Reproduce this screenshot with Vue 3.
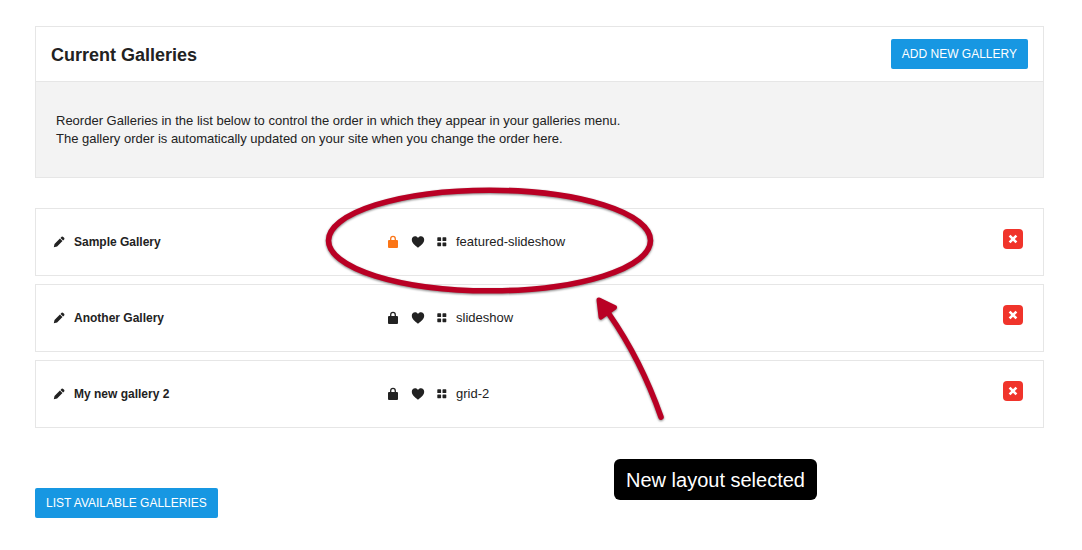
<script setup>
import { ref } from 'vue'

const galleries = ref([
  { name: 'Sample Gallery', layout: 'featured-slideshow', locked: true },
  { name: 'Another Gallery', layout: 'slideshow', locked: false },
  { name: 'My new gallery 2', layout: 'grid-2', locked: false },
])
</script>

<template>
  <main class="page">
    <section class="panel">
      <header class="panel-head">
        <h1>Current Galleries</h1>
        <button type="button" class="btn">ADD NEW GALLERY</button>
      </header>
      <p class="help">
        Reorder Galleries in the list below to control the order in which they appear in your galleries menu.<br>
        The gallery order is automatically updated on your site when you change the order here.
      </p>
    </section>

    <ul class="list">
      <li v-for="g in galleries" :key="g.name" class="row">
        <div class="name">
          <button type="button" class="icon" :aria-label="'Edit ' + g.name">
            <svg width="12" height="12" viewBox="0 0 12 12">
              <path d="M.8 11.2 L1.5 8 L6.9 2.5 L9.5 5.1 L4.1 10.5 Z M7.5 1.9 L8.6.8 Q9.4.2 10.2.9 L11.1 1.8 Q11.8 2.6 11.2 3.4 L10.1 4.5 Z" />
            </svg>
          </button>
          <strong>{{ g.name }}</strong>
        </div>
        <div class="tools">
          <button type="button" class="icon" :class="{ locked: g.locked }" :aria-label="'Lock ' + g.name">
            <svg width="12" height="14" viewBox="0 0 12 14">
              <path d="M3.7 6 V3.9 Q3.7 1.3 6 1.3 Q8.3 1.3 8.3 3.9 V6" fill="none" stroke="currentColor" stroke-width="1.3" />
              <rect x="1" y="5" width="10" height="8" rx="1" />
            </svg>
          </button>
          <button type="button" class="icon" :aria-label="'Favourite ' + g.name">
            <svg width="14" height="14" viewBox="0 0 14 14">
              <path d="M7 12.8 C5.8 11.4 .8 8.6 .8 4.7 C.8 2.5 2.2 1.2 4 1.2 C5.4 1.2 6.4 1.9 7 2.9 C7.6 1.9 8.6 1.2 10 1.2 C11.8 1.2 13.2 2.5 13.2 4.7 C13.2 8.6 8.2 11.4 7 12.8 Z" />
            </svg>
          </button>
          <button type="button" class="icon" :aria-label="'Layout of ' + g.name">
            <svg width="10" height="14" viewBox="0 0 10 14">
              <rect x="0.3" y="2.3" width="3.8" height="3.8" rx="0.6" />
              <rect x="5.5" y="2.3" width="3.8" height="3.8" rx="0.6" />
              <rect x="0.3" y="7.4" width="3.8" height="3.8" rx="0.6" />
              <rect x="5.5" y="7.4" width="3.8" height="3.8" rx="0.6" />
            </svg>
          </button>
          <span class="layout">{{ g.layout }}</span>
        </div>
        <button type="button" class="delete" :aria-label="'Delete ' + g.name">
          <svg width="10" height="10" viewBox="0 0 10 10">
            <path d="M1.6 1.6 L8.4 8.4 M8.4 1.6 L1.6 8.4" stroke="currentColor" stroke-width="2.6" />
          </svg>
        </button>
      </li>
    </ul>

    <button type="button" class="btn">LIST AVAILABLE GALLERIES</button>

    <svg class="marks" width="400" height="260" viewBox="300 170 400 260" aria-hidden="true">
      <ellipse cx="489.5" cy="240.5" rx="161" ry="50.3" fill="none" stroke="#b90024" stroke-width="5.6" />
      <path d="M609 314 Q641 360 661 417" fill="none" stroke="#b90024" stroke-width="5.6" stroke-linecap="round" />
      <path d="M599 300 L614.5 307.5 L601 317 Z" fill="#b90024" stroke="#b90024" stroke-width="5" stroke-linejoin="round" />
    </svg>
    <div class="callout">New layout selected</div>
  </main>
</template>

<style>
body {
  margin: 0;
  background: #fff;
}
</style>

<style scoped>
.page {
  position: relative;
  padding: 26px 38px 32px 35px;
  font: 13px/18px "Liberation Sans", Arial, sans-serif;
  color: #222;
}
.panel {
  border: 1px solid #e6e6e6;
}
.panel-head {
  display: flex;
  align-items: center;
  justify-content: space-between;
  padding: 12px 15px;
  border-bottom: 1px solid #e6e6e6;
}
h1 {
  margin: 0;
  padding-top: 2px;
  font-size: 18px;
  line-height: 24px;
}
.btn {
  height: 30px;
  padding: 0 11px;
  border: 0;
  border-radius: 2px;
  background: #1797e2;
  color: #fff;
  font: 12px/30px "Liberation Sans", Arial, sans-serif;
}
.help {
  margin: 0;
  padding: 30px 20px 29px;
  background: #f3f3f3;
}
.list {
  display: grid;
  gap: 8px;
  margin: 30px 0 60px;
  padding: 0;
  list-style: none;
}
.row {
  display: grid;
  grid-template-columns: 334px 1fr auto;
  align-items: center;
  padding: 20px 20px 24px 17px;
  border: 1px solid #e6e6e6;
  background: #fff;
}
.name,
.tools {
  display: flex;
  align-items: center;
  padding-top: 4px;
}
.name {
  gap: 9px;
  font-size: 12px;
}
.icon {
  display: flex;
  padding: 0;
  border: 0;
  background: none;
  color: #222;
}
.icon svg {
  fill: currentColor;
}
.tools {
  gap: 12px;
}
.layout {
  margin-left: -3px;
}
.locked {
  color: #fb7516;
}
.delete {
  display: flex;
  align-items: center;
  justify-content: center;
  align-self: start;
  width: 20px;
  height: 20px;
  padding: 0;
  border: 0;
  border-radius: 4px;
  background: #f0342b;
  color: #fff;
}
.marks {
  position: absolute;
  left: 300px;
  top: 170px;
  pointer-events: none;
  filter: drop-shadow(0 1px 1px rgba(0, 0, 0, 0.5));
}
.callout {
  position: absolute;
  left: 614px;
  top: 459px;
  padding: 9px 12px 8px;
  border-radius: 6px;
  background: #000;
  color: #fff;
  font-size: 20px;
  line-height: 24px;
}
</style>
